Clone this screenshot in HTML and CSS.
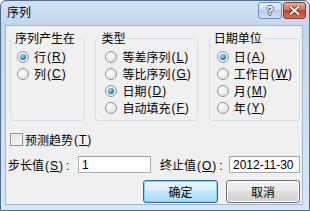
FILE: index.html
```html
<!DOCTYPE html>
<html>
<head>
<meta charset="utf-8">
<link rel="stylesheet" href="styles.css">
</head>
<body>
<div class="win">
  <div class="titlebar">
    <span class="title">序列</span>
    <div class="caps">
      <span class="cap help">?</span>
      <span class="cap close"><svg width="11" height="9" viewBox="0 0 11 9"><path d="M1.5 1 L9.5 8 M9.5 1 L1.5 8" stroke="#6b2418" stroke-width="3.6" stroke-linecap="round"/><path d="M1.5 1 L9.5 8 M9.5 1 L1.5 8" stroke="#ffffff" stroke-width="2" stroke-linecap="round"/></svg></span>
    </div>
  </div>
  <div class="content">
    <div class="groups">
      <fieldset class="grp g1">
        <legend>序列产生在</legend>
        <div class="rows">
          <div class="row"><span class="radio on"></span>行<span class="k">(<u>R</u>)</span></div>
          <div class="row"><span class="radio"></span>列<span class="k">(<u>C</u>)</span></div>
        </div>
      </fieldset>
      <fieldset class="grp g2">
        <legend>类型</legend>
        <div class="rows">
          <div class="row"><span class="radio"></span>等差序列<span class="k">(<u>L</u>)</span></div>
          <div class="row"><span class="radio"></span>等比序列<span class="k">(<u>G</u>)</span></div>
          <div class="row"><span class="radio on"></span>日期<span class="k">(<u>D</u>)</span></div>
          <div class="row"><span class="radio"></span>自动填充<span class="k">(<u>F</u>)</span></div>
        </div>
      </fieldset>
      <fieldset class="grp g3">
        <legend>日期单位</legend>
        <div class="rows">
          <div class="row"><span class="radio on"></span>日<span class="k">(<u>A</u>)</span></div>
          <div class="row"><span class="radio"></span>工作日<span class="k">(<u>W</u>)</span></div>
          <div class="row"><span class="radio"></span>月<span class="k">(<u>M</u>)</span></div>
          <div class="row"><span class="radio"></span>年<span class="k">(<u>Y</u>)</span></div>
        </div>
      </fieldset>
    </div>
    <div class="check-row"><span class="chk"></span>预测趋势<span class="k">(<u>T</u>)</span></div>
    <div class="field-row">
      <span class="lbl lbl1">步长值<span class="k">(<u>S</u>)</span><span class="colon">:</span></span>
      <input class="field f1" type="text" value="1">
      <span class="lbl lbl2">终止值<span class="k">(<u>O</u>)</span><span class="colon">:</span></span>
      <input class="field f2" type="text" value="2012-11-30">
    </div>
    <div class="btn-row">
      <button class="btn def">确定</button>
      <button class="btn cancel">取消</button>
    </div>
  </div>
</div>
</body>
</html>
```
FILE: styles.css
```css
* { box-sizing: border-box; }
body {
  margin: 0;
  font-family: "Liberation Sans", "Noto Sans CJK SC", sans-serif;
  font-size: 12px;
  color: #000;
}
.win {
  width: 310px;
  height: 211px;
  border: 1px solid #4f6d8e;
  border-radius: 6px 6px 0 0;
  background: linear-gradient(#d3e2f3, #c2d6ed 24px, #cadcef 80px, #d8e6f4);
  display: flex;
  flex-direction: column;
  overflow: hidden;
}
.titlebar {
  height: 24px;
  display: flex;
  padding-left: 6px;
}
.title {
  line-height: 22px;
  font-family: "Noto Sans CJK SC", sans-serif;
  font-size: 12px;
}
.caps {
  margin-left: auto;
  margin-top: 1px;
  margin-right: 3px;
  display: flex;
  gap: 1px;
  height: 17px;
}
.cap {
  border-radius: 3px;
  display: flex;
  align-items: center;
  justify-content: center;
}
.help {
  width: 24px;
  border: 1px solid #6e8fb3;
  background: linear-gradient(#e6eff9, #cfdff0 45%, #b6cde7 50%, #cbdef2);
  color: #fff;
  font-weight: bold;
  font-size: 12px;
  line-height: 12px;
  text-shadow: 1px 0 0 #4d6885, -1px 0 0 #4d6885, 0 1px 0 #4d6885, 0 -1px 0 #4d6885;
}
.close {
  width: 23px;
  border: 1px solid #8e3a2c;
  background: linear-gradient(#eaaa9c, #d9735f 45%, #c4452f 50%, #d66a52);
}
.content {
  flex: 1;
  margin: 0 6px 5px 4px;
  border: 1px solid #a3b7cc;
  background: #f0f0f0;
  padding: 0 2px 0 2px;
  display: flex;
  flex-direction: column;
}
.groups {
  display: flex;
  margin-top: 6px;
  padding-left: 2px;
}
.grp {
  margin: 0;
  border: 1px solid #d5dfe5;
  border-radius: 3px;
  padding: 4px 0 4px 0;
  min-width: 0;
}
.grp legend {
  padding: 0 2px;
  line-height: 12px;
  height: 12px;
  font-family: "Noto Sans CJK SC", sans-serif;
}
.g1 { width: 76px; }
.g1 legend { margin-left: 2px; }
.g1 .rows { padding-left: 6px; }
.g2 { width: 103px; margin-left: 10px; }
.g2 legend { margin-left: 3px; }
.g2 .rows { padding-left: 9px; }
.g3 { width: 92px; margin-left: 11px; }
.g3 legend { margin-left: 2px; }
.g3 .rows { padding-left: 7px; }
.row {
  display: flex;
  align-items: center;
  height: 17px;
  white-space: nowrap;
}
.radio {
  flex: none;
  width: 12px;
  height: 12px;
  border-radius: 50%;
  border: 1px solid #939597;
  background: radial-gradient(circle at 35% 35%, #ffffff, #e9e9e9 55%, #d2d2d2 100%);
  margin-right: 5px;
  display: flex;
  align-items: center;
  justify-content: center;
}
.radio.on::after {
  content: "";
  width: 6px;
  height: 6px;
  border-radius: 50%;
  background: radial-gradient(circle at 40% 35%, #a8e2ff, #2b83c8 55%, #0d4577);
}
.k {
  margin-left: 1px;
  letter-spacing: 1px;
}
.k u { text-decoration: underline; text-underline-offset: 1px; }
.check-row {
  display: flex;
  align-items: center;
  height: 17px;
  margin-top: 10px;
  padding-left: 2px;
  white-space: nowrap;
}
.chk {
  flex: none;
  width: 13px;
  height: 13px;
  border: 1px solid #8f8f8f;
  background: linear-gradient(135deg, #dcdcdc, #fbfbfb);
  box-shadow: inset 0 0 0 1px #f4f4f4;
  margin-right: 2px;
}
.field-row {
  display: flex;
  align-items: center;
  height: 17px;
  margin-top: 8px;
  white-space: nowrap;
}
.lbl { flex: none; }
.lbl1 { width: 70px; }
.lbl2 { width: 69px; margin-left: 9px; }
.colon { margin-left: 2px; }
.field {
  flex: none;
  height: 17px;
  margin: 0;
  border: 1px solid #a6abb2;
  border-top-color: #9a9fa6;
  background: #fff;
  padding: 0 0 0 3px;
  font-family: "Liberation Sans", sans-serif;
  font-size: 12px;
  color: #000;
  outline: none;
}
.f1 { width: 73px; }
.f2 { width: 71px; }
.btn-row {
  display: flex;
  justify-content: flex-end;
  gap: 8px;
  margin-top: 7px;
}
.btn {
  height: 23px;
  margin: 0;
  padding: 0;
  border: 1px solid #707070;
  border-radius: 3px;
  background: linear-gradient(#f2f2f2 0%, #ebebeb 45%, #dddddd 50%, #cfcfcf 100%);
  box-shadow: inset 0 0 0 1px #fcfcfc;
  font-family: "Noto Sans CJK SC", sans-serif;
  font-size: 12px;
  color: #000;
}
.btn.def {
  width: 75px;
  border-color: #2f6f9c;
  background: linear-gradient(#e8f6fd, #d6effc 45%, #bfe7fd 50%, #a9daf5 100%);
  box-shadow: inset 0 0 0 1px #7fd6f0;
}
.btn.cancel { width: 74px; }
```
